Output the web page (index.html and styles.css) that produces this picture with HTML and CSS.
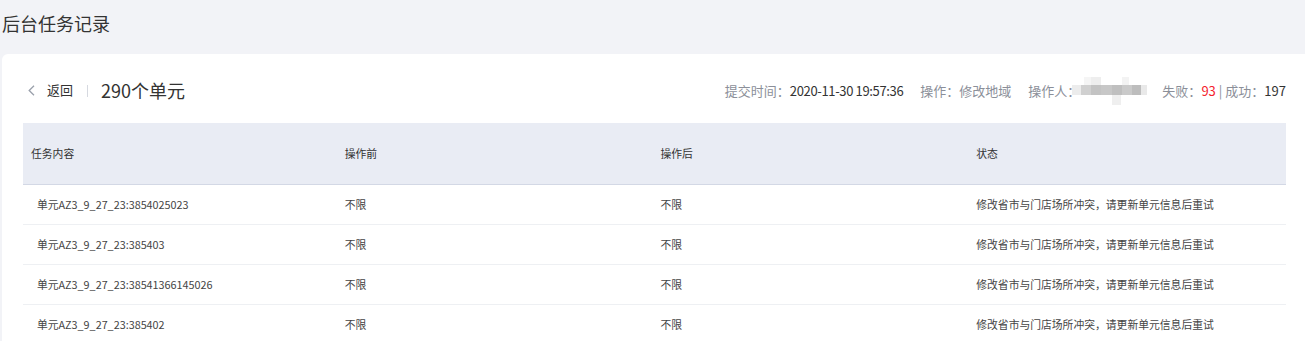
FILE: index.html
```html
<!DOCTYPE html>
<html lang="zh-CN">
<head>
<meta charset="utf-8">
<title>后台任务记录</title>
<link rel="stylesheet" href="styles.css">
</head>
<body>
  <h1 class="page-title">后台任务记录</h1>
  <section class="card">
    <div class="toolbar">
      <div class="toolbar-left">
        <a class="back" href="#">
          <svg class="back-icon" width="7" height="11" viewBox="0 0 7 11"><path d="M6 0.8 L1.2 5.5 L6 10.2" fill="none" stroke="#9aa0ab" stroke-width="1.3"/></svg>
          <span class="back-text">返回</span>
        </a>
        <span class="sep"></span>
        <span class="count">290个单元</span>
      </div>
      <div class="toolbar-right">
        <span class="info"><span class="label">提交时间：</span><span class="value date">2020-11-30 19:57:36</span></span>
        <span class="info"><span class="label">操作：</span><span class="label">修改地域</span></span>
        <span class="info"><span class="label">操作人：</span><span class="blur"><i class="c1"></i><i class="c2"></i><i class="c3"></i><i class="c4"></i><i class="c5"></i><i class="c6"></i><i class="c7"></i><i class="c8"></i><i class="t1"></i><i class="t2"></i><i class="t3"></i><i class="b1"></i></span></span>
        <span class="info"><span class="label">失败：</span><span class="fail">93</span><span class="pipe">|</span><span class="label">成功：</span><span class="value">197</span></span>
      </div>
    </div>
    <table class="tasks">
      <thead>
        <tr><th>任务内容</th><th>操作前</th><th>操作后</th><th>状态</th></tr>
      </thead>
      <tbody>
        <tr><td>单元AZ3_9_27_23:3854025023</td><td>不限</td><td>不限</td><td>修改省市与门店场所冲突，请更新单元信息后重试</td></tr>
        <tr><td>单元AZ3_9_27_23:385403</td><td>不限</td><td>不限</td><td>修改省市与门店场所冲突，请更新单元信息后重试</td></tr>
        <tr><td>单元AZ3_9_27_23:38541366145026</td><td>不限</td><td>不限</td><td>修改省市与门店场所冲突，请更新单元信息后重试</td></tr>
        <tr><td>单元AZ3_9_27_23:385402</td><td>不限</td><td>不限</td><td>修改省市与门店场所冲突，请更新单元信息后重试</td></tr>
      </tbody>
    </table>
  </section>
</body>
</html>
```

FILE: styles.css
```css
* { box-sizing: border-box; }
html, body { margin: 0; padding: 0; }
body {
  background: #f2f3f7;
  font-family: "Noto Sans CJK SC", "Liberation Sans", sans-serif;
  color: #333;
  overflow: hidden;
}
.page-title {
  margin: 0;
  height: 54px;
  line-height: 46px;
  padding-left: 2px;
  font-size: 18px;
  font-weight: normal;
  color: #333;
}
.card {
  margin-left: 2px;
  background: #fff;
  border-radius: 6px 0 0 0;
  padding: 0 19px 0 21px;
  min-height: 300px;
}
.toolbar {
  height: 69px;
  padding-top: 22px;
  display: flex;
  justify-content: space-between;
  align-items: flex-start;
}
.toolbar-left, .toolbar-right {
  display: flex;
  align-items: center;
  height: 28px;
}
.back {
  display: flex;
  align-items: center;
  text-decoration: none;
  color: #333;
}
.back-icon { margin-left: 5px; margin-right: 12px; display: block; }
.back-text { font-size: 13px; line-height: 28px; }
.sep {
  width: 1px;
  height: 12px;
  background: #d6d9e0;
  margin: 1px 13px 0 14px;
}
.count { font-size: 18px; line-height: 28px; color: #333; }
.toolbar-right {
  gap: 17px;
  font-size: 13px;
}
.info { display: flex; align-items: center; white-space: nowrap; }
.label { color: #8b8f99; }
.value { color: #333; }
.date { letter-spacing: -0.35px; }
.fail { color: #f5222d; }
.pipe { color: #8b8f99; margin: 0 3px; }
.blur {
  position: relative;
  display: flex;
  height: 10px;
  margin: 0 -2px 0 -8px;
}
.blur i { display: block; height: 10px; }
.blur .c1 { width: 9px; background: #ececec; }
.blur .c2 { width: 10px; background: #d0d0d0; }
.blur .c3 { width: 10px; background: #c3c3c3; }
.blur .c4 { width: 11px; background: #c7c7c7; }
.blur .c5 { width: 10px; background: #bfbfbf; }
.blur .c6 { width: 10px; background: #cacaca; }
.blur .c7 { width: 9px; background: #bdbdbd; }
.blur .c8 { width: 6px; background: #e9e9e9; }
.blur .t1, .blur .t2, .blur .t3, .blur .b1 { position: absolute; height: 8px; }
.blur .t1 { left: 12px; top: -8px; width: 7px; background: #f5f5f5; }
.blur .t2 { left: 19px; top: -8px; width: 10px; background: #eeeeee; }
.blur .t3 { left: 50px; top: -8px; width: 7px; background: #f3f3f3; }
.blur .b1 { left: 40px; top: 10px; width: 9px; height: 10px; background: #efefef; }

.tasks {
  width: 100%;
  border-collapse: collapse;
  table-layout: fixed;
  font-size: 10.8px;
}
.tasks th {
  background: #e9ecf4;
  height: 61px;
  text-align: left;
  font-weight: normal;
  color: #333;
  padding: 0 6px;
  border-bottom: 1px solid #d3d8e5;
}
.tasks th:first-child { padding-left: 8px; }
.tasks td {
  height: 40px;
  padding: 0 6px;
  color: #444;
  border-bottom: 1px solid #eef0f3;
}
.tasks td:first-child { padding-left: 14px; }
```
